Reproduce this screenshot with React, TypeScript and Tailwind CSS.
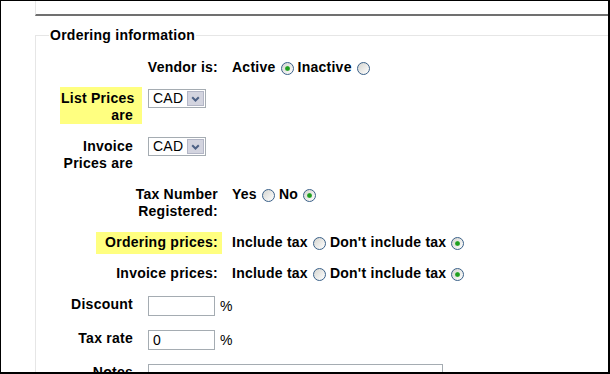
import React from "react";

const font = "font-['Liberation_Sans',Arial,sans-serif]";

function Radio({ checked }: { checked?: boolean }) {
  return (
    <span className="ml-[5px] mr-[4px] mt-[3px] flex h-[13px] w-[13px] shrink-0 items-center justify-center rounded-full border border-[#3a6088] bg-[linear-gradient(135deg,#d4d4cf,#ffffff)]">
      {checked && <span className="h-[5px] w-[5px] rounded-full bg-[radial-gradient(circle,#1e9e1e_45%,#8fd68f_100%)]" />}
    </span>
  );
}

function Select() {
  return (
    <div className="flex h-[19px] w-[58px] border border-[#a5acb2] bg-white">
      <span className="flex-1 pl-[4px] text-[14px] font-normal leading-[17px] text-black">CAD</span>
      <span className="m-px flex w-[17px] items-center justify-center border border-[#b3b6c6] bg-[#d3d4df]">
        <svg width="9" height="6" viewBox="0 0 9 6">
          <path d="M1.2 1.2l3.3 3.3 3.3-3.3" stroke="#4d6185" strokeWidth="2" fill="none" />
        </svg>
      </span>
    </div>
  );
}

function TextBox({ value }: { value?: string }) {
  return (
    <div className="h-[20px] w-[67px] border border-[#a5acb2] bg-white pl-[4px] text-[14px] font-normal leading-[18px]">
      {value}
    </div>
  );
}

function RadioRow({
  label,
  highlight,
  className,
  children,
}: {
  label: React.ReactNode;
  highlight?: boolean;
  className?: string;
  children: React.ReactNode;
}) {
  return (
    <div className={`flex items-start ${className ?? ""}`}>
      <div
        className={`ml-[60px] w-[126px] pr-[4px] text-right leading-[17px] ${
          highlight ? "bg-[#ffff80] pb-[3px] pt-[2px]" : ""
        }`}
      >
        {label}
      </div>
      <div className={`ml-[10px] flex items-start whitespace-nowrap leading-[17px] ${highlight ? "pt-[2px]" : ""}`}>
        {children}
      </div>
    </div>
  );
}

function FieldRow({
  label,
  highlight,
  className,
  children,
}: {
  label: React.ReactNode;
  highlight?: boolean;
  className?: string;
  children: React.ReactNode;
}) {
  return (
    <div className={`flex items-start ${className ?? ""}`}>
      <div
        className={`ml-[24px] w-[82px] whitespace-nowrap pl-px pr-[9px] text-right leading-[17px] ${
          highlight ? "bg-[#ffff80] pt-[3px]" : ""
        }`}
      >
        {label}
      </div>
      <div className={`ml-[6px] flex items-start ${highlight ? "pt-[2px]" : ""}`}>{children}</div>
    </div>
  );
}

export default function App() {
  return (
    <div
      className={`${font} h-[374px] w-[610px] overflow-hidden border-b-2 border-l border-r-2 border-t border-black bg-white text-[14px] font-bold tracking-[0.25px] text-black`}
    >
      <div className="ml-[34px]">
        <div className="h-[15px] border-b-2 border-l border-b-[#707070] border-l-[#e6e6e6]" />

        <fieldset className="mt-[11px] border-l border-t border-[#e6e6e6]">
          <legend className="ml-[13px] px-px leading-[17px]">Ordering information</legend>

          <RadioRow label="Vendor is:" className="mt-[15px]">
            Active
            <Radio checked />
            Inactive
            <Radio />
          </RadioRow>

          <FieldRow
            label={
              <>
                List Prices
                <br />
                are
              </>
            }
            highlight
            className="mt-[11px]"
          >
            <Select />
          </FieldRow>

          <FieldRow
            label={
              <>
                Invoice
                <br />
                Prices are
              </>
            }
            className="mt-[11px] pt-[3px]"
          >
            <div className="-mt-px">
              <Select />
            </div>
          </FieldRow>

          <RadioRow
            label={
              <>
                Tax Number
                <br />
                Registered:
              </>
            }
            className="mt-[14px]"
          >
            Yes
            <Radio />
            No
            <Radio checked />
          </RadioRow>

          <RadioRow label="Ordering prices:" highlight className="mt-[12px]">
            Include tax
            <Radio />
            Don't include tax
            <Radio checked />
          </RadioRow>

          <RadioRow label="Invoice prices:" className="mt-[11px]">
            Include tax
            <Radio />
            Don't include tax
            <Radio checked />
          </RadioRow>

          <FieldRow label="Discount" className="mt-[14px]">
            <TextBox />
            <span className="ml-[5px] mt-[2px] text-[14px] font-normal leading-[17px]">%</span>
          </FieldRow>

          <FieldRow label="Tax rate" className="mt-[14px]">
            <TextBox value="0" />
            <span className="ml-[5px] mt-[2px] text-[14px] font-normal leading-[17px]">%</span>
          </FieldRow>

          <FieldRow label="Notes" className="mt-[14px]">
            <div className="h-[60px] w-[295px] border border-[#a5acb2] bg-white" />
          </FieldRow>
        </fieldset>
      </div>
    </div>
  );
}
